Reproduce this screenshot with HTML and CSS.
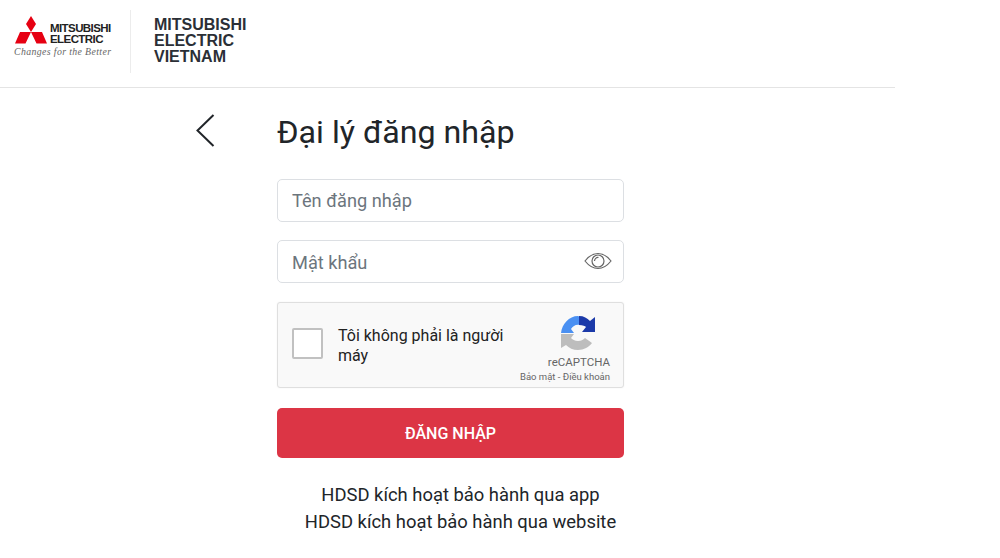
FILE: index.html
```html
<!DOCTYPE html>
<html lang="vi">
  <head>
    <meta charset="UTF-8" />
    <title>Đại lý đăng nhập</title>
    <link rel="stylesheet" href="styles.css">
  </head>
  <body>
    <header class="site-header">
      <div class="brand">
        <div class="brand-top">
          <svg class="brand-mark" viewBox="0 0 32 28" width="32" height="28">
            <path fill="#e60012" d="M16 0l5 8-5 8-5-8zM16 16l-5.500 11.500H0L5 16zM16 16h11l5 11.500H21.500z" />
          </svg>
          <span class="brand-name">MITSUBISHI<br>ELECTRIC</span>
        </div>
        <div class="brand-slogan">Changes for the Better</div>
      </div>
      <div class="site-title">MITSUBISHI<br>ELECTRIC<br>VIETNAM</div>
    </header>

    <main class="login">
      <a class="back-link" href="#">
        <svg viewBox="0 0 20 34" width="20" height="34">
          <path d="M17.500 1L1.500 16.500l16 15.500" fill="none" stroke="#212529" stroke-width="2" />
        </svg>
      </a>
      <form class="login-form">
        <h1>Đại lý đăng nhập</h1>
        <div class="field field-user">
          <input type="text" placeholder="Tên đăng nhập" />
        </div>
        <div class="field field-pass">
          <input type="password" placeholder="Mật khẩu" />
          <svg class="eye" viewBox="0 0 28 18" width="28" height="18">
            <path d="M1 9C5 4 9 1.500 14 1.500S23 4 27 9c-4 5-8 7.500-13 7.500S5 14 1 9z" fill="none" stroke="#666" stroke-width="1.200" />
            <circle cx="14" cy="9" r="6" fill="none" stroke="#666" stroke-width="1.200" />
            <path d="M10.500 9a3.500 3.500 0 0 1 4-3.500" fill="none" stroke="#666" stroke-width="1.200" />
          </svg>
        </div>
        <div class="captcha">
          <span class="captcha-box"></span>
          <span class="captcha-text">Tôi không phải là người máy</span>
          <div class="captcha-logo">
            <svg viewBox="0 0 36 36" width="36" height="36">
              <path fill="#4a90f2" d="M1 18C2 9 9 1 18 1l2 1v8c-4-1-7 1-9 4l3 4z" />
              <path fill="#1c3aa9" d="M19 1c5 0 8 2 11 5l5-4v15H22l4-5c-1-1-3-2-7-2z" />
              <path fill="#bdbdbd" d="M1 19h13l-3 4c1 1 4 3 7 3 3 0 5-1 7-3l7 5c-3 4-8 7-14 7-5 0-9-2-12-5l-5 3z" />
            </svg>
            <span class="captcha-brand">reCAPTCHA</span>
            <span class="captcha-terms">Bảo mật - Điều khoản</span>
          </div>
        </div>
        <button class="submit" type="button">ĐĂNG NHẬP</button>
        <div class="guide-links">
          <a href="#">HDSD kích hoạt bảo hành qua app</a>
          <a href="#">HDSD kích hoạt bảo hành qua website</a>
        </div>
      </form>
    </main>
  </body>
</html>
```

FILE: styles.css
```css
* {
  box-sizing: border-box;
}
body {
  margin: 0;
  font-family: "Roboto", sans-serif;
  background-color: #fff;
  color: #212529;
}

.site-header {
  width: 895px;
  height: 88px;
  padding: 10px 0 14px 14px;
  display: flex;
  align-items: stretch;
  border-bottom: 1px solid #e4e4e4;
}
.brand {
  width: 117px;
  padding-top: 6px;
  border-right: 1px solid #ececec;
}
.brand-top {
  display: flex;
  align-items: flex-start;
  gap: 3px;
  height: 28px;
  padding-left: 1px;
}
.brand-name {
  font-family: "Liberation Sans", sans-serif;
  font-size: 11.500px;
  font-weight: bold;
  line-height: 11px;
  letter-spacing: -0.580px;
  color: #222;
  padding-top: 7px;
}
.brand-slogan {
  font-family: "Liberation Serif", serif;
  font-style: italic;
  font-size: 9.800px;
  color: #666;
  margin-top: 2px;
  letter-spacing: 0.380px;
  white-space: nowrap;
}
.site-title {
  margin-left: 23px;
  padding-top: 7px;
  font-family: "Liberation Sans", sans-serif;
  font-weight: bold;
  font-size: 16px;
  line-height: 16px;
  color: #2b2f36;
}

.login {
  display: flex;
  padding-left: 196px;
}
.back-link {
  width: 81px;
  padding-top: 26px;
}
.login-form {
  width: 347px;
}
.login-form h1 {
  margin: 0;
  padding-top: 24px;
  height: 91px;
  font-size: 32.200px;
  line-height: 40px;
  font-weight: 400;
}

.field {
  position: relative;
  margin-bottom: 19px;
}
.field-user {
  margin-bottom: 18px;
}
.field input {
  display: block;
  width: 100%;
  height: 43px;
  padding: 0 14px;
  border: 1px solid #dcdfe3;
  border-radius: 5px;
  font-family: inherit;
  font-size: 18.200px;
  color: #495057;
}
.field-pass input {
  padding-top: 2px;
}
.field input::placeholder {
  color: #6c757d;
}
.eye {
  position: absolute;
  top: 12px;
  right: 12px;
}

.captcha {
  height: 86px;
  display: flex;
  background-color: #f9f9f9;
  border: 1px solid #dfdfdf;
  border-radius: 3px;
  box-shadow: 0 0 2px rgba(0, 0, 0, 0.06);
  padding: 23px 13px 0 14px;
}
.captcha-box {
  flex: none;
  width: 31px;
  height: 31px;
  margin-top: 2px;
  background-color: #fff;
  border: 2px solid #c1c1c1;
  border-radius: 2px;
}
.captcha-text {
  width: 175px;
  margin-left: 15px;
  font-size: 16px;
  line-height: 20px;
  color: #222;
}
.captcha-logo {
  flex: 1;
  margin-top: -11px;
  display: flex;
  flex-direction: column;
  align-items: flex-end;
  font-size: 11.500px;
  color: #666;
}
.captcha-logo svg {
  margin-right: 14px;
}
.captcha-brand {
  margin-top: 4px;
  line-height: 14px;
}
.captcha-terms {
  margin-top: 2px;
  font-size: 9.500px;
  line-height: 11px;
  white-space: nowrap;
}

.submit {
  display: block;
  width: 100%;
  height: 50px;
  margin-top: 20px;
  background-color: #dc3545;
  border: none;
  border-radius: 5px;
  color: #fff;
  font-family: inherit;
  font-size: 16px;
  font-weight: 500;
}

.guide-links {
  margin-top: 23px;
  padding-left: 20px;
  display: flex;
  flex-direction: column;
  align-items: center;
  font-size: 18.400px;
  line-height: 27px;
}
.guide-links a {
  color: #212529;
  text-decoration: none;
  white-space: nowrap;
}
```
